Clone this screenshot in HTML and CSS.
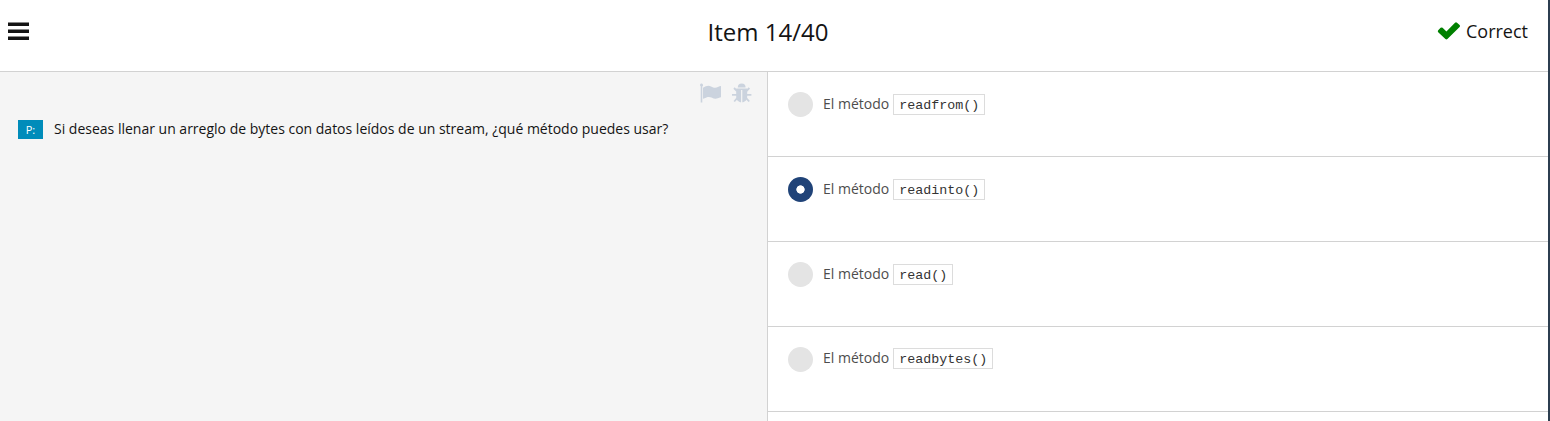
FILE: index.html
```html
<!DOCTYPE html>
<html lang="es">
<head>
<meta charset="utf-8">
<title>Item 14/40</title>
<link rel="stylesheet" href="styles.css">
</head>
<body>
<div class="app">
  <header class="header">
    <svg class="menu" viewBox="0 0 21 18" width="21" height="18"><path d="M0 .5h21v3.400H0zM0 7.500h21v3.400H0zM0 14.500h21v3.400H0z"/></svg>
    <h1 class="title">Item 14/40</h1>
    <div class="status">
      <svg class="check" viewBox="0 0 24 19" width="24" height="19"><path d="M1.200 9.200L3.600 6.800Q4.600 6 5.600 6.800L9.400 10.500 18 1.700Q19 .8 20 1.700L22.600 4.100Q23.500 5.100 22.600 6.100L10.400 18Q9.400 18.800 8.400 18L1.200 11.200Q.3 10.200 1.200 9.200z"/></svg>
      <span>Correct</span>
    </div>
  </header>
  <main class="main">
    <section class="question">
      <div class="tools">
        <svg viewBox="0 0 22 20" width="22" height="20"><path d="M0 2.100a1.500 1.500 0 1 1 2.300 1.200V19.500H.7V3.300A1.500 1.500 0 0 1 0 2.100zM3 4.800C6 3 8.500 2.200 11 3.500c3 1.500 4.500 1.700 7.500.3 1-.5 2.500-1.300 2.500-.3V13.500c0 .6-.5.9-1 1.100-3 1.500-5.500 1.600-8.500 0-2.500-1.200-5-.4-7.500 1-.6.300-1 .2-1-.4z"/></svg>
        <svg viewBox="0 0 20 20" width="20" height="20"><path d="M5.800 4.500a3.900 3.900 0 0 1 7.800 0zM4.200 5.500h11v8c0 3.700-2.400 5.600-4.900 5.800V7H9.100v12.300c-2.500-.2-4.900-2.100-4.900-5.800z"/><path class="legs" d="M5 8L2 5M14.400 8l3-3M5 11.800H0M14.400 11.800h5M5.200 15.200l-3 3.300M14.200 15.200l3 3.300"/></svg>
      </div>
      <div class="prompt"><span class="tag">P:</span><span class="text">Si deseas llenar un arreglo de bytes con datos leídos de un stream, ¿qué método puedes usar?</span></div>
    </section>
    <section class="options">
      <div class="option"><span class="radio"></span><p class="answer">El método <code>readfrom()</code></p></div>
      <div class="option"><span class="radio selected"></span><p class="answer">El método <code>readinto()</code></p></div>
      <div class="option"><span class="radio"></span><p class="answer">El método <code>read()</code></p></div>
      <div class="option last"><span class="radio"></span><p class="answer">El método <code>readbytes()</code></p></div>
    </section>
  </main>
</div>
</body>
</html>
```
FILE: styles.css
```css
* { box-sizing: border-box; }
body {
  margin: 0;
  height: 421px;
  overflow: hidden;
  background: #fff;
  color: #141414;
  font-family: "Open Sans", "Noto Sans", sans-serif;
}
.app {
  display: flex;
  flex-direction: column;
  height: 421px;
  border-right: 2px solid #2c3e50;
}
.header {
  display: grid;
  grid-template-columns: 1fr auto 1fr;
  align-items: start;
  height: 72px;
  padding: 0 20px 0 8px;
  border-bottom: 1px solid #d2d2d2;
}
.menu { margin-top: 22px; fill: #141414; }
.title {
  margin: 15px 0 0;
  font-size: 24px;
  font-weight: 400;
  line-height: 33px;
}
.status {
  display: flex;
  justify-content: flex-end;
  gap: 5px;
  margin-top: 19px;
  font-size: 18px;
  line-height: 25px;
}
.check { margin-top: 2px; fill: #008000; }
.main { display: flex; flex: 1; min-height: 0; }
.question {
  width: 768px;
  background: #f5f5f5;
  border-right: 1px solid #d2d2d2;
}
.tools {
  display: flex;
  justify-content: flex-end;
  gap: 10px;
  padding: 11px 15px 0 0;
  fill: #cbd3de;
}
.legs { fill: none; stroke: #cbd3de; stroke-width: 1.8; }
.prompt { display: flex; align-items: flex-start; padding: 17px 18px 0; }
.tag {
  width: 25px;
  height: 19px;
  background: #008cba;
  color: #fff;
  font-size: 11px;
  line-height: 20px;
  text-align: center;
}
.text { margin: -1px 0 0 11px; font-size: 14px; line-height: 19px; white-space: nowrap; }
.options { flex: 1; }
.option {
  display: flex;
  height: 85px;
  padding: 20px;
  border-bottom: 1px solid #d2d2d2;
}
.radio {
  width: 25px;
  height: 25px;
  border-radius: 50%;
  background: #e4e4e4;
}
.selected { background: radial-gradient(circle, #fff 3.8px, #204378 4.5px); }
.answer {
  display: flex;
  align-items: flex-start;
  gap: 4px;
  margin: 0 0 0 10px;
  color: #4d4d4d;
  font-size: 14px;
  line-height: 24px;
}
.last .answer { margin-top: -1px; }
code {
  height: 21px;
  margin-top: 2px;
  padding: 0 5px;
  border: 1px solid #dcdcdc;
  color: #333;
  font-family: "Liberation Mono", monospace;
  font-size: 13.33px;
  line-height: 21px;
}
```
